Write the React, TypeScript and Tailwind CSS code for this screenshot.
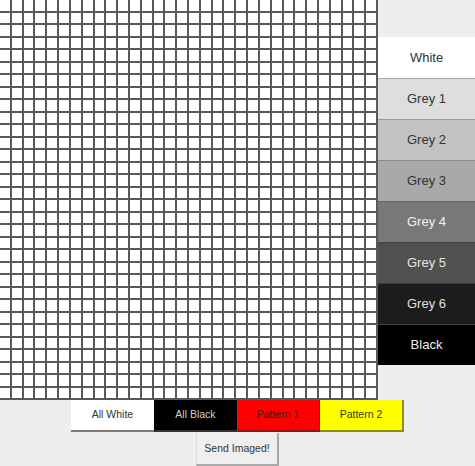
import React from "react";

const greys = [
  { label: "White", bg: "bg-[#ffffff]", text: "text-[#333333]", border: "border-[#ffffff]" },
  { label: "Grey 1", bg: "bg-[#dedede]", text: "text-[#333333]", border: "border-[#a8a8a8]" },
  { label: "Grey 2", bg: "bg-[#c2c2c2]", text: "text-[#333333]", border: "border-[#9a9a9a]" },
  { label: "Grey 3", bg: "bg-[#a9a9a9]", text: "text-[#333333]", border: "border-[#8a8a8a]" },
  { label: "Grey 4", bg: "bg-[#787878]", text: "text-[#f2f2f2]", border: "border-[#666666]" },
  { label: "Grey 5", bg: "bg-[#505050]", text: "text-[#e6e6e6]", border: "border-[#444444]" },
  { label: "Grey 6", bg: "bg-[#1c1c1c]", text: "text-[#e0e0e0]", border: "border-[#3a3a3a]" },
  { label: "Black", bg: "bg-[#000000]", text: "text-[#f0f0f0]", border: "border-[#444444]" },
];

export default function App() {
  const cells = Array.from({ length: 32 * 32 });
  return (
    <div className="w-[475px] h-[466px] bg-[#eeeeee] flex flex-col font-['Liberation_Sans',Arial,sans-serif] overflow-hidden">
      <div className="flex">
        <div className="w-[378px] h-[400px] bg-white grid grid-cols-[repeat(32,minmax(0,1fr))] grid-rows-[repeat(32,minmax(0,1fr))]">
          {cells.map((_, i) => (
            <div key={i} className="border-r-[2px] border-b-[2px] border-[#595959]" />
          ))}
        </div>
        <div className="w-[97px] flex flex-col pt-[37px]">
          {greys.map((g) => (
            <div
              key={g.label}
              className={`h-[41px] flex items-center justify-center text-[13px] border-t ${g.bg} ${g.text} ${g.border}`}
            >
              {g.label}
            </div>
          ))}
        </div>
      </div>
      <div className="flex justify-center">
        <div className="w-[83px] h-[32px] bg-white flex items-center justify-center text-[10.5px] text-[#333333] border-b-2 border-[#7a7a7a]">
          All White
        </div>
        <div className="w-[83px] h-[32px] bg-black flex items-center justify-center text-[10.5px] text-[#d0d0d0] border-b-2 border-[#333333]">
          All Black
        </div>
        <div className="w-[83px] h-[32px] bg-[#ff0000] flex items-center justify-center text-[10.5px] text-[#5a0c0c] border-b-2 border-r border-[#7a2020]">
          Pattern 1
        </div>
        <div className="w-[84px] h-[32px] bg-[#ffff00] flex items-center justify-center text-[10.5px] text-[#3a3a10] border-b-2 border-r-2 border-[#8a8a30]">
          Pattern 2
        </div>
      </div>
      <div className="flex justify-center pt-px">
        <div className="w-[83px] h-[33px] bg-[#efefef] flex items-center justify-center text-[10.5px] text-[#333333] border-l border-r-2 border-b-2 border-l-[#dddddd] border-r-[#aaaaaa] border-b-[#aaaaaa]">
          Send Imaged!
        </div>
      </div>
    </div>
  );
}
